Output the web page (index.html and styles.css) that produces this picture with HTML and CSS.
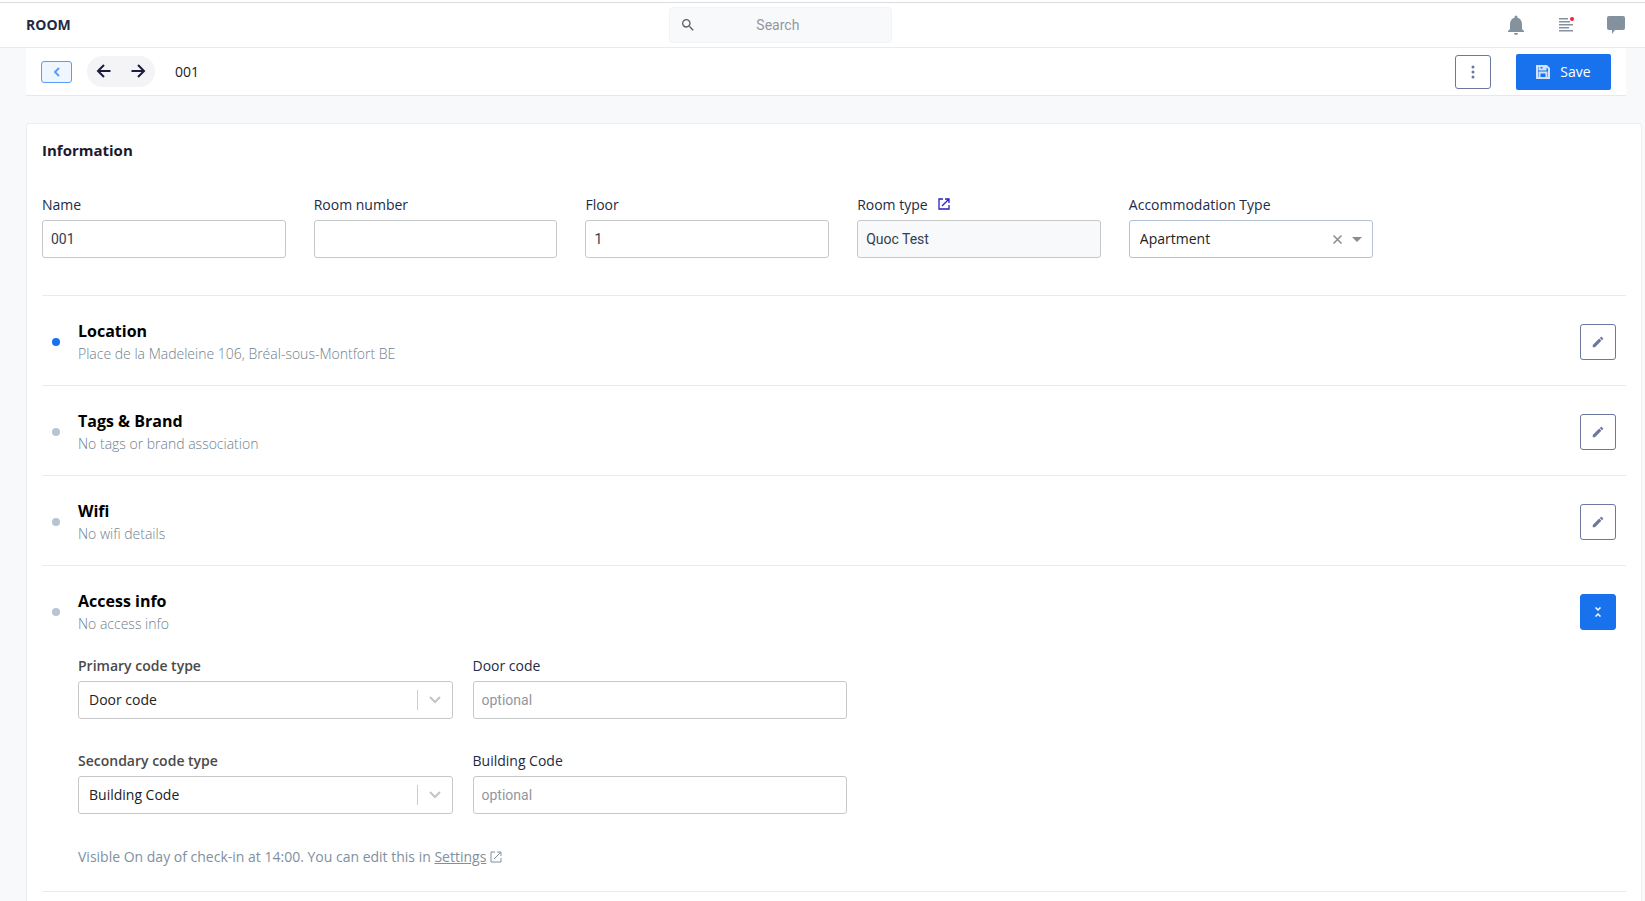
FILE: index.html
```
<!DOCTYPE html>
<html lang="en">

<head>
  <meta charset="UTF-8">
  <meta name="viewport" content="width=device-width, initial-scale=1.0">
  <title>Room - 001</title>
  <link rel="stylesheet" href="styles.css">
</head>

<body>
  <!-- Header -->
  <header class="header">
    <h1 class="header-title">ROOM</h1>
    <label class="search">
      <svg width="16" height="16" viewBox="0 0 24 24">
        <path d="M15.5 14h-.79l-.28-.27A6.47 6.47 0 0 0 16 9.5 6.5 6.5 0 1 0 9.5 16c1.61 0 3.09-.59 4.23-1.57l.27.28v.79l5 4.99L20.49 19l-4.99-5zm-6 0C7.01 14 5 11.99 5 9.5S7.01 5 9.5 5 14 7.01 14 9.5 11.99 14 9.5 14z" />
      </svg>
      <input type="search" placeholder="Search" aria-label="Search">
    </label>
    <div class="header-actions">
      <button type="button" aria-label="Notifications">
        <svg width="24" height="24" viewBox="0 0 24 24">
          <path d="M12 22c1.1 0 2-.9 2-2h-4c0 1.1.9 2 2 2zm6-6v-5c0-3.07-1.63-5.64-4.5-6.32V4a1.5 1.5 0 0 0-3 0v.68C7.64 5.36 6 7.92 6 11v5l-2 2v1h16v-1z" />
        </svg>
      </button>
      <button type="button" aria-label="News">
        <svg width="16" height="16" viewBox="0 0 16 16">
          <path d="M1 1h9v1.500H1zM1 4h11v1.500H1zM1 7h14v1.500H1zM1 10h10v1.500H1zM1 13h14v1.500H1z" />
          <circle class="alert" cx="14" cy="2" r="2" />
        </svg>
      </button>
      <button type="button" aria-label="Messages">
        <svg width="20" height="20" viewBox="0 0 20 20">
          <path d="M3 1h14a2 2 0 0 1 2 2v10a2 2 0 0 1-2 2H9l-3 4v-4H3a2 2 0 0 1-2-2V3a2 2 0 0 1 2-2z" />
        </svg>
      </button>
    </div>
  </header>

  <!-- Toolbar -->
  <div class="toolbar">
    <button type="button" class="back-btn" aria-label="Back">
      <svg width="8" height="10" viewBox="0 0 8 10">
        <path d="M6 1L2 5l4 4" />
      </svg>
    </button>
    <div class="pager">
      <button type="button" aria-label="Previous room">
        <svg width="16" height="16" viewBox="0 0 16 16">
          <path d="M14.500 7H2M8 1L2 7l6 6" />
        </svg>
      </button>
      <button type="button" aria-label="Next room">
        <svg width="16" height="16" viewBox="0 0 16 16">
          <path d="M1.500 7H14M8 1l6 6-6 6" />
        </svg>
      </button>
    </div>
    <span class="room-name">001</span>
    <button type="button" class="menu-btn" aria-label="More actions">
      <svg width="4" height="14" viewBox="0 0 4 14">
        <circle cx="2" cy="2" r="1.500" />
        <circle cx="2" cy="7" r="1.500" />
        <circle cx="2" cy="12" r="1.500" />
      </svg>
    </button>
    <button type="button" class="save-btn">
      <svg width="14" height="14" viewBox="0 0 14 14">
        <path d="M1 1h9.500L13 3.500V13H1zM3.500 1v3.500h6V1M3.500 13V7.500h7V13M7.500 2v1.500" />
      </svg>
      Save
    </button>
  </div>

  <!-- Room details -->
  <main class="card">
    <h2 class="card-title">Information</h2>

    <div class="info-fields">
      <div class="field">
        <label for="name">Name</label>
        <input type="text" id="name" value="001">
      </div>
      <div class="field">
        <label for="room-number">Room number</label>
        <input type="text" id="room-number">
      </div>
      <div class="field">
        <label for="floor">Floor</label>
        <input type="text" id="floor" value="1">
      </div>
      <div class="field">
        <div class="label-row">
          <label for="room-type">Room type</label>
          <a href="#" class="open-link" aria-label="Open room type">
            <svg width="12" height="12" viewBox="0 0 12 12">
              <path d="M5 1H1v10h10V7M7 1h4v4M11 1L4 8" />
            </svg>
          </a>
        </div>
        <input type="text" id="room-type" value="Quoc Test" readonly>
      </div>
      <div class="field">
        <label for="accommodation">Accommodation Type</label>
        <div class="select select-clearable">
          <select id="accommodation">
            <option>Apartment</option>
          </select>
          <div class="select-icons">
            <button type="button" aria-label="Clear">
              <svg width="9" height="9" viewBox="0 0 9 9">
                <path d="M.5.5l8 8M8.500.5l-8 8" />
              </svg>
            </button>
            <svg class="caret" width="10" height="5" viewBox="0 0 10 5">
              <path d="M0 0h10L5 5z" />
            </svg>
          </div>
        </div>
      </div>
    </div>

    <section class="section">
      <div class="section-head">
        <span class="dot active"></span>
        <div class="section-text">
          <h3>Location</h3>
          <p>Place de la Madeleine 106, Bréal-sous-Montfort BE</p>
        </div>
        <button type="button" class="edit-btn" aria-label="Edit location">
          <svg width="14" height="14" viewBox="0 0 24 24">
            <path d="M3 17.250V21h3.750L17.810 9.940l-3.750-3.750zM20.710 7.040a1 1 0 0 0 0-1.410l-2.340-2.340a1 1 0 0 0-1.410 0l-1.830 1.830 3.750 3.750z" />
          </svg>
        </button>
      </div>
    </section>

    <section class="section">
      <div class="section-head">
        <span class="dot"></span>
        <div class="section-text">
          <h3>Tags &amp; Brand</h3>
          <p>No tags or brand association</p>
        </div>
        <button type="button" class="edit-btn" aria-label="Edit tags and brand">
          <svg width="14" height="14" viewBox="0 0 24 24">
            <path d="M3 17.250V21h3.750L17.810 9.940l-3.750-3.750zM20.710 7.040a1 1 0 0 0 0-1.410l-2.340-2.340a1 1 0 0 0-1.410 0l-1.830 1.830 3.750 3.750z" />
          </svg>
        </button>
      </div>
    </section>

    <section class="section">
      <div class="section-head">
        <span class="dot"></span>
        <div class="section-text">
          <h3>Wifi</h3>
          <p>No wifi details</p>
        </div>
        <button type="button" class="edit-btn" aria-label="Edit wifi">
          <svg width="14" height="14" viewBox="0 0 24 24">
            <path d="M3 17.250V21h3.750L17.810 9.940l-3.750-3.750zM20.710 7.040a1 1 0 0 0 0-1.410l-2.340-2.340a1 1 0 0 0-1.410 0l-1.830 1.830 3.750 3.750z" />
          </svg>
        </button>
      </div>
    </section>

    <section class="section">
      <div class="section-head">
        <span class="dot"></span>
        <div class="section-text">
          <h3>Access info</h3>
          <p>No access info</p>
        </div>
        <button type="button" class="edit-btn open" aria-label="Collapse access info">
          <svg width="6" height="10" viewBox="0 0 6 10">
            <path d="M.5.5L3 3 5.500.5M.5 9.500L3 7l2.500 2.500" />
          </svg>
        </button>
      </div>

      <div class="section-body">
        <div class="access-fields">
          <div class="field">
            <label for="primary-type" class="strong">Primary code type</label>
            <div class="select">
              <select id="primary-type">
                <option>Door code</option>
              </select>
              <div class="select-icons divided">
                <svg width="14" height="8" viewBox="0 0 14 8">
                  <path d="M2 1l5 5 5-5" />
                </svg>
              </div>
            </div>
          </div>
          <div class="field">
            <label for="door-code">Door code</label>
            <input type="text" id="door-code" placeholder="optional">
          </div>
          <div class="field">
            <label for="secondary-type" class="strong">Secondary code type</label>
            <div class="select">
              <select id="secondary-type">
                <option>Building Code</option>
              </select>
              <div class="select-icons divided">
                <svg width="14" height="8" viewBox="0 0 14 8">
                  <path d="M2 1l5 5 5-5" />
                </svg>
              </div>
            </div>
          </div>
          <div class="field">
            <label for="building-code">Building Code</label>
            <input type="text" id="building-code" placeholder="optional">
          </div>
        </div>

        <p class="note">
          Visible On day of check-in at 14:00. You can edit this in
          <a href="#"><span>Settings</span><svg width="12" height="12" viewBox="0 0 12 12">
              <path d="M5 1H1v10h10V7M7 1h4v4M11 1L4 8" />
            </svg></a>
        </p>
      </div>
    </section>
  </main>
</body>

</html>
```
FILE: styles.css
```
:root {
  --primary: #1872ed;
  --navy: #222b45;
  --outline: #6b76a1;
  --muted: #8090a0;
  --border: #c6c7c9;
  --line: #e9ebef;
  --page: #f8f9fb;
}

* {
  margin: 0;
  padding: 0;
  box-sizing: border-box;
}

body {
  display: flex;
  flex-direction: column;
  min-height: 100vh;
  padding-top: 2px;
  font-family: "Open Sans", "Noto Sans", sans-serif;
  font-size: 14px;
  line-height: 20px;
  color: var(--navy);
  background-color: var(--page);
}

button,
input,
select {
  font: inherit;
  color: inherit;
}

button {
  display: flex;
  align-items: center;
  justify-content: center;
  background: none;
  border: none;
  cursor: pointer;
}

/* Header */
.header {
  display: flex;
  align-items: center;
  justify-content: space-between;
  height: 46px;
  padding: 0 4px 0 26px;
  background-color: white;
  border-top: 1px solid #dcdcde;
  border-bottom: 1px solid var(--line);
  box-shadow: 0 -2px 0 white;
}

.header-title {
  font-size: 14px;
  font-weight: 700;
}

.search {
  display: flex;
  align-items: center;
  width: 223px;
  height: 36px;
  padding: 0 10px;
  background-color: var(--page);
  border: 1px solid #f2f3f5;
  border-radius: 4px;
}

.search svg {
  fill: #5c6066;
}

.search input {
  flex: 1;
  min-width: 0;
  padding-right: 8px;
  border: none;
  outline: none;
  background: none;
  font-family: Roboto, sans-serif;
  text-align: center;
}

input::placeholder {
  color: #92979f;
}

.header-actions {
  display: flex;
}

.header-actions button {
  width: 50px;
  height: 36px;
}

.header-actions svg {
  fill: #84919f;
}

.header-actions .alert {
  fill: #f5222d;
}

/* Toolbar */
.toolbar {
  display: flex;
  align-items: center;
  height: 48px;
  margin: 0 19px 0 26px;
  padding: 0 15px;
  background-color: white;
  border-bottom: 1px solid #e6e8ec;
}

.back-btn {
  width: 31px;
  height: 22px;
  background-color: #eff6ff;
  border: 1px solid #5a9cf8;
  border-radius: 3px;
}

.back-btn svg {
  fill: none;
  stroke: #5a9cf8;
  stroke-width: 2;
}

.pager {
  display: flex;
  margin: 0 20px 0 15px;
  height: 31px;
  background-color: #f4f4f6;
  border-radius: 16px;
}

.pager button {
  width: 34px;
}

.pager svg {
  fill: none;
  stroke: #1c1c3c;
  stroke-width: 2;
}

.room-name {
  flex: 1;
  color: #222;
}

.menu-btn {
  width: 36px;
  height: 34px;
  margin-right: 25px;
  border: 1px solid var(--outline);
  border-radius: 3px;
}

.menu-btn svg {
  fill: var(--outline);
}

.save-btn {
  gap: 10px;
  width: 95px;
  height: 36px;
  color: white;
  background-color: var(--primary);
  border-radius: 2px;
}

.save-btn svg {
  fill: none;
  stroke: #cfe1fb;
  stroke-width: 2;
}

/* Card */
.card {
  flex: 1;
  margin: 27px 3px 0 26px;
  padding: 16px 15px 0;
  background-color: white;
  border: 1px solid #eceef1;
  border-bottom: none;
  border-radius: 4px 4px 0 0;
}

.card-title {
  font-size: 15px;
  font-weight: 700;
  color: #1d1930;
}

.info-fields {
  display: grid;
  grid-template-columns: repeat(5, 1fr);
  gap: 28px;
  width: 84%;
  margin: 35px 0 37px;
}

.field {
  display: flex;
  flex-direction: column;
  gap: 5px;
}

.label-row {
  display: flex;
  gap: 10px;
}

.open-link svg {
  fill: none;
  stroke: #2a1fc0;
  stroke-width: 1.300;
}

.field label.strong {
  font-weight: 600;
  color: #4a4a4a;
}

.field input,
.select select {
  width: 100%;
  height: 38px;
  background-color: white;
  border: 1px solid var(--border);
  border-radius: 3px;
}

.field input {
  padding: 0 8px;
  font-family: Roboto, sans-serif;
  color: #333d50;
}

.field input[readonly] {
  background-color: #f8f9fa;
}

.select {
  position: relative;
}

.select select {
  appearance: none;
  padding: 0 10px;
  color: #222;
}

.select-clearable select {
  border-color: #b3c3d4;
}

.select-icons {
  position: absolute;
  top: 0;
  right: 0;
  display: flex;
  align-items: center;
  gap: 10px;
  height: 100%;
  padding-right: 11px;
  pointer-events: none;
}

.select-icons svg {
  fill: none;
  stroke: #8c8c8c;
  stroke-width: 1.500;
}

.select-icons .caret {
  fill: #8c8c8c;
  stroke: none;
}

.select-icons.divided::before {
  content: "";
  width: 1px;
  height: 20px;
  background-color: #ccc;
}

.select-icons.divided svg {
  stroke: #c4c4c4;
  stroke-width: 2;
}

/* Sections */
.section {
  padding: 28px 10px 25px;
  border-top: 1px solid var(--line);
}

.section:last-child {
  padding-bottom: 24px;
  border-bottom: 1px solid var(--line);
}

.section-head {
  display: flex;
  align-items: center;
  height: 36px;
}

.dot {
  width: 8px;
  height: 8px;
  margin-right: 18px;
  border-radius: 50%;
  background-color: #b7c4d4;
}

.dot.active {
  background-color: var(--primary);
}

.section-text {
  flex: 1;
}

.section-text h3 {
  font-size: 16px;
  font-weight: 700;
  line-height: 24px;
  color: black;
}

.section-text p {
  font-weight: 300;
  line-height: 22px;
  color: #6f7f90;
}

.edit-btn {
  width: 36px;
  height: 36px;
  border: 1px solid var(--outline);
  border-radius: 3px;
}

.edit-btn svg {
  fill: var(--outline);
}

.edit-btn.open {
  background-color: var(--primary);
  border-color: var(--primary);
}

.edit-btn.open svg {
  fill: none;
  stroke: white;
  stroke-width: 1.500;
}

.section-body {
  padding: 26px 0 0 26px;
}

.access-fields {
  display: grid;
  grid-template-columns: 1fr 1fr;
  gap: 32px 20px;
  width: 50%;
}

.note {
  margin-top: 33px;
  color: var(--muted);
}

.note a {
  color: inherit;
  text-decoration: none;
}

.note a span {
  margin-right: 4px;
  text-decoration: underline;
}

.note svg {
  fill: none;
  stroke: var(--muted);
  vertical-align: -1px;
}
```
